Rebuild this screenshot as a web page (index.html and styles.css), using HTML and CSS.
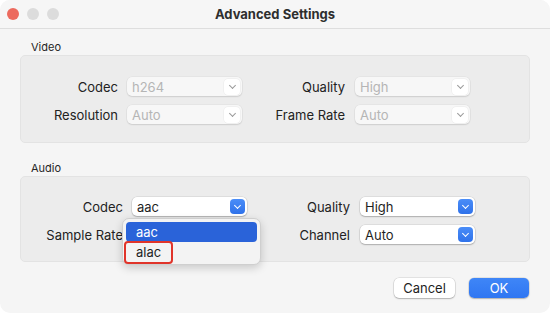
FILE: index.html
```html
<!DOCTYPE html>
<html lang="en">
<head>
    <meta charset="UTF-8">
    <meta name="viewport" content="width=device-width, initial-scale=1.0">
    <title>Advanced Settings</title>
    <link rel="stylesheet" href="styles.css">
</head>
<body>
    <div class="window">
        <div class="titlebar">
            <div class="lights">
                <span class="light red"></span>
                <span class="light"></span>
                <span class="light"></span>
            </div>
            <div class="title">Advanced Settings</div>
            <div></div>
        </div>

        <div class="content">
            <div class="group-label">Video</div>
            <div class="group">
                <div class="row">
                    <label>Codec</label>
                    <div class="select disabled"><span>h264</span><i class="arrow"></i></div>
                    <label>Quality</label>
                    <div class="select disabled"><span>High</span><i class="arrow"></i></div>
                </div>
                <div class="row">
                    <label>Resolution</label>
                    <div class="select disabled"><span>Auto</span><i class="arrow"></i></div>
                    <label>Frame Rate</label>
                    <div class="select disabled"><span>Auto</span><i class="arrow"></i></div>
                </div>
            </div>

            <div class="group-label audio-label">Audio</div>
            <div class="group audio">
                <div class="row">
                    <label>Codec</label>
                    <div class="select"><span>aac</span><i class="arrow"></i></div>
                    <label>Quality</label>
                    <div class="select"><span>High</span><i class="arrow"></i></div>
                </div>
                <div class="row">
                    <label>Sample Rate</label>
                    <div class="select"><span>Auto</span><i class="arrow"></i></div>
                    <label>Channel</label>
                    <div class="select"><span>Auto</span><i class="arrow"></i></div>
                </div>

                <!-- codec popup menu -->
                <div class="menu">
                    <div class="menu-item selected">aac</div>
                    <div class="menu-item marked"><span class="mark">alac</span></div>
                </div>
            </div>

            <div class="buttons">
                <button class="btn">Cancel</button>
                <button class="btn primary">OK</button>
            </div>
        </div>
    </div>
</body>
</html>
```

FILE: styles.css
```css
* { box-sizing: border-box; }

body {
    margin: 0;
    background: #ffffff;
    font-family: Inter, "Noto Sans", "Liberation Sans", sans-serif;
    color: #262626;
}

.window {
    width: 550px;
    height: 313px;
    background: #f5f5f5;
    border-radius: 10px;
    overflow: hidden;
}

/* title bar */
.titlebar {
    height: 29px;
    display: grid;
    grid-template-columns: 1fr auto 1fr;
    align-items: center;
    border-bottom: 1px solid #dedede;
    background: #f6f6f6;
}

.lights {
    display: flex;
    gap: 8px;
    padding-left: 7px;
}

.light {
    width: 12px;
    height: 12px;
    border-radius: 50%;
    background: #dcdcdc;
}

.light.red { background: #ec6a5e; }

.title {
    font-size: 13px;
    font-weight: 700;
    color: #2e2e2e;
}

/* body */
.content {
    padding: 11px 20px 0;
}

.group-label {
    font-size: 11px;
    line-height: 14px;
    padding-left: 11px;
    margin-bottom: 1px;
}

.audio-label { margin-top: 18px; }

.group {
    position: relative;
    height: 88px;
    background: #ececec;
    border: 1px solid #e3e3e3;
    border-radius: 5px;
    padding-top: 21px;
    display: flex;
    flex-direction: column;
    gap: 9px;
}

.group.audio {
    height: 86px;
    padding-top: 20px;
    padding-left: 5px;
}

.row {
    display: grid;
    grid-template-columns: 97px 115px 95px 115px;
    column-gap: 9px;
    align-items: center;
}

.row label:nth-child(3) { margin-right: 1px; }

label {
    text-align: right;
    font-size: 13px;
    color: #222;
    white-space: nowrap;
}

/* popup buttons */
.select {
    height: 19px;
    background: #ffffff;
    border-radius: 5px;
    box-shadow: 0 0 0 0.5px rgba(0, 0, 0, 0.12), 0 1px 1.5px rgba(0, 0, 0, 0.22);
    display: flex;
    align-items: center;
    justify-content: space-between;
    padding: 0 2px 0 5px;
    font-size: 13px;
    color: #1f1f1f;
}

.select.disabled {
    background: #f7f7f7;
    color: #b5b5b5;
    box-shadow: 0 0 0 0.5px rgba(0, 0, 0, 0.06), 0 1px 1.5px rgba(0, 0, 0, 0.1);
}

.arrow {
    width: 15px;
    height: 15px;
    border-radius: 4px;
    background: linear-gradient(#4a8df8, #2f72ea);
    position: relative;
}

.arrow::after {
    content: '';
    position: absolute;
    left: 5px;
    top: 3.5px;
    width: 4px;
    height: 4px;
    border-right: 1.6px solid #fff;
    border-bottom: 1.6px solid #fff;
    transform: rotate(45deg);
}

.select.disabled .arrow {
    width: 16px;
    height: 16px;
    background: #ffffff;
    box-shadow: 0 0 0 0.5px rgba(0, 0, 0, 0.06);
}

.select.disabled .arrow::after {
    left: 5.5px;
    top: 4px;
    border-color: #9a9a9a;
    border-width: 1.2px;
}

/* dropdown menu over the audio codec */
.menu {
    position: absolute;
    left: 101px;
    top: 41px;
    width: 139px;
    padding: 3px 3px 2px;
    background: #f3f3f3;
    border-radius: 7px;
    border: 1px solid #cfcfcf;
    box-shadow: 0 3px 8px rgba(0, 0, 0, 0.18);
}

.menu-item {
    height: 20px;
    line-height: 20px;
    font-size: 13px;
    padding-left: 10px;
    border-radius: 4px;
    color: #1f1f1f;
}

.menu-item.selected {
    background: #2a63d9;
    color: #ffffff;
}

.menu-item.marked {
    padding-left: 0;
    height: 21px;
}

/* red highlight round the "alac" entry */
.mark {
    display: block;
    width: 49px;
    height: 23px;
    margin: -1px 0 0 -2px;
    padding-left: 10px;
    line-height: 19px;
    border: 2px solid #e0342a;
    border-radius: 4px;
}

/* footer */
.buttons {
    display: flex;
    justify-content: flex-end;
    gap: 14px;
    margin-top: 16px;
}

.btn {
    height: 20px;
    width: 61px;
    border: none;
    border-radius: 5px;
    background: #ffffff;
    box-shadow: 0 0 0 0.5px rgba(0, 0, 0, 0.14), 0 1px 1.5px rgba(0, 0, 0, 0.22);
    font-family: inherit;
    font-size: 13px;
    color: #1f1f1f;
    padding: 0;
}

.btn.primary {
    width: 60px;
    margin-right: 1px;
    background: linear-gradient(#3f86f7, #2f76f2);
    color: #ffffff;
}
```
